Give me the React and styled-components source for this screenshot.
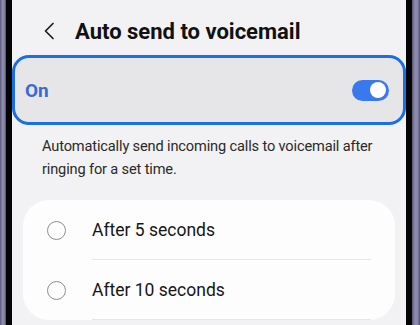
import React, { useState } from "react";
import styled, { createGlobalStyle } from "styled-components";

const GlobalStyle = createGlobalStyle`
  html, body {
    margin: 0;
    padding: 0;
    background: #f2f2f4;
  }
  body {
    font-family: Roboto, "Noto Sans", Arial, sans-serif;
    -webkit-font-smoothing: antialiased;
  }
`;

const options = ["After 5 seconds", "After 10 seconds"];

function App() {
  const [on, setOn] = useState(true);
  const [picked, setPicked] = useState(null);

  return (
    <>
      <GlobalStyle />
      <Phone>
        <Bezel side="left" />
        <Edge />
        <Screen>
          <Header>
            <BackBtn aria-label="Back">
              <svg width="12" height="18" viewBox="0 0 12 18" fill="none">
                <path d="M10 1.5L2.5 9L10 16.5" stroke="#1c1c1c" strokeWidth="1.7" strokeLinecap="round" strokeLinejoin="round" />
              </svg>
            </BackBtn>
            <Title>Auto send to voicemail</Title>
          </Header>

          <MasterBar onClick={() => setOn(!on)}>
            <MasterLabel>{on ? "On" : "Off"}</MasterLabel>
            <Toggle on={on}>
              <Knob />
            </Toggle>
          </MasterBar>

          <Description>
            Automatically send incoming calls to voicemail after ringing for a set time.
          </Description>

          <Card>
            {options.map((label, i) => (
              <OptionRow key={label} onClick={() => setPicked(i)}>
                <Radio checked={picked === i} />
                <OptionText>{label}</OptionText>
              </OptionRow>
            ))}
          </Card>
        </Screen>
        <Edge />
        <Bezel side="right" />
      </Phone>
    </>
  );
}

export default App;

/* ================= CSS ================= */

const Phone = styled.div`
  display: flex;
  width: 420px;
  height: 325px;
  overflow: hidden;
  background: #f2f2f4;
`;

const Bezel = styled.div`
  flex: 0 0 ${({ side }) => (side === "left" ? "6px" : "8px")};
  background: linear-gradient(
    90deg,
    #5d5a78 0%,
    #8d8bb0 40%,
    #8a88ab 70%,
    #4e4c66 100%
  );
`;

const Edge = styled.div`
  flex: 0 0 6px;
  background: #050506;
`;

const Screen = styled.div`
  flex: 1;
  display: flex;
  flex-direction: column;
  background: #f2f2f4;
  min-width: 0;
  overflow: hidden;

  & > * {
    flex-shrink: 0;
  }
`;

const Header = styled.div`
  display: flex;
  align-items: center;
  height: 42px;
  margin-top: 10px;
  padding-left: 31px;
`;

const BackBtn = styled.button`
  display: flex;
  align-items: center;
  padding: 0;
  border: none;
  background: none;
  width: 12px;
  height: 18px;
  margin-right: 20px;
  cursor: pointer;
`;

const Title = styled.h1`
  margin: 0;
  font-size: 22px;
  font-weight: 700;
  color: #111;
`;

const MasterBar = styled.div`
  display: flex;
  align-items: center;
  justify-content: space-between;
  box-sizing: border-box;
  height: 70px;
  margin-top: 3px;
  padding: 0 14px 0 10px;
  border: 3.5px solid #1a6fe2;
  border-radius: 17px;
  background: #e6e6e9;
  cursor: pointer;
`;

const MasterLabel = styled.span`
  font-size: 19px;
  font-weight: 700;
  color: #3a6bd3;
`;

const Toggle = styled.div`
  display: flex;
  align-items: center;
  justify-content: ${({ on }) => (on ? "flex-end" : "flex-start")};
  width: 37px;
  height: 21px;
  padding: 0 3px;
  box-sizing: border-box;
  border-radius: 11px;
  background: ${({ on }) => (on ? "#3a78ee" : "#b8b8be")};
`;

const Knob = styled.div`
  width: 16px;
  height: 16px;
  border-radius: 50%;
  background: #fff;
`;

const Description = styled.p`
  margin: 10px 0 0;
  padding: 0 8px 0 30px;
  font-size: 14.6px;
  letter-spacing: -0.15px;
  line-height: 23px;
  color: #2a2a2a;
`;

const Card = styled.div`
  margin: 19px 11px 0;
  background: #fdfdfd;
  border-radius: 26px;
  padding: 0 24px 0 24px;
`;

const OptionRow = styled.div`
  display: flex;
  align-items: stretch;
  height: 60px;
  cursor: pointer;
`;

const Radio = styled.span`
  align-self: center;
  flex: 0 0 auto;
  width: 19px;
  height: 19px;
  box-sizing: border-box;
  border-radius: 50%;
  border: ${({ checked }) => (checked ? "6px solid #3a78ee" : "1.6px solid #8d8d8d")};
  margin-right: 26px;
`;

const OptionText = styled.span`
  flex: 1;
  display: flex;
  align-items: center;
  font-size: 17.5px;
  color: #161616;
  border-bottom: 1px solid #e6e6e8;
`;
